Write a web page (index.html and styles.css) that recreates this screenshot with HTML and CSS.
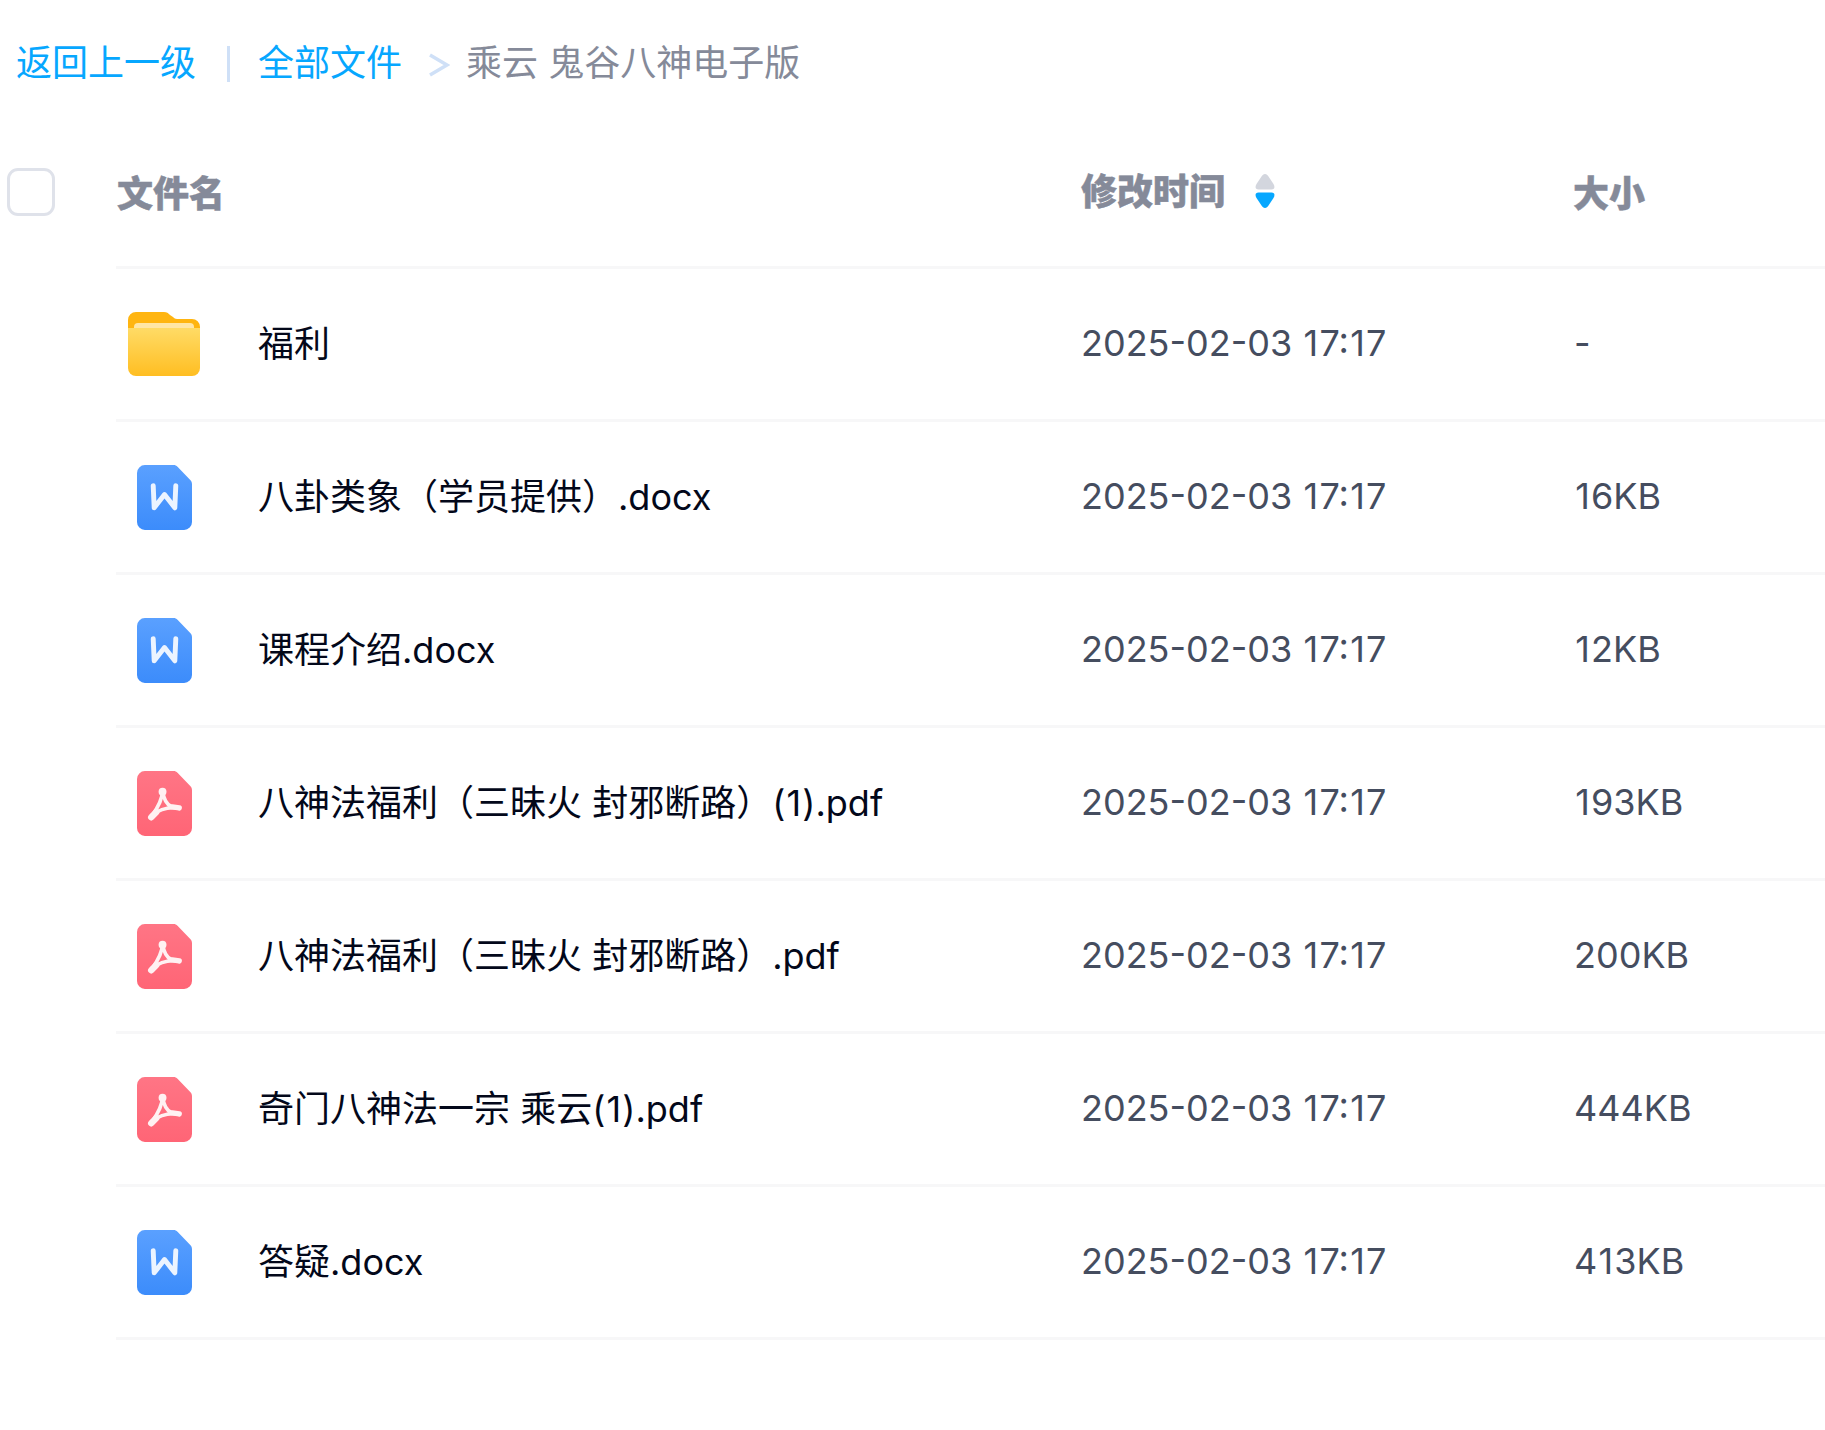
FILE: index.html
```html
<!DOCTYPE html>
<html lang="zh-CN">
<head>
<meta charset="utf-8">
<title>全部文件</title>
<link rel="stylesheet" href="styles.css">
</head>
<body>
<svg class="defs" width="0" height="0" aria-hidden="true">
  <defs>
    <linearGradient id="gFolder" x1="0" y1="0" x2="0" y2="1"><stop offset="0" stop-color="#ffdb66"/><stop offset="1" stop-color="#ffbe22"/></linearGradient>
    <linearGradient id="gWord" x1="0" y1="0" x2="0" y2="1"><stop offset="0" stop-color="#5aa0ff"/><stop offset="1" stop-color="#3c8cfb"/></linearGradient>
    <linearGradient id="gPdf" x1="0" y1="0" x2="0" y2="1"><stop offset="0" stop-color="#ff7585"/><stop offset="1" stop-color="#ff6576"/></linearGradient>
    <symbol id="folder" viewBox="0 0 72 64">
      <path d="M0 8a8 8 0 0 1 8-8h28c3 0 4 1 6 3l3 2c2 2 3 2 6 2h13a8 8 0 0 1 8 8v10H0z" fill="#ffb511"/>
      <path d="M10 11h52a4 4 0 0 1 4 4v3H6v-3a4 4 0 0 1 4-4z" fill="#ffe6a6"/>
      <path d="M0 16h72v40a8 8 0 0 1-8 8H8a8 8 0 0 1-8-8z" fill="url(#gFolder)"/>
    </symbol>
    <symbol id="word" viewBox="0 0 56 66">
      <path d="M8 0h29c2 0 3 .6 4.500 2L54 15c1.400 1.400 2 2.600 2 4.500V58a8 8 0 0 1-8 8H8a8 8 0 0 1-8-8V8a8 8 0 0 1 8-8z" fill="url(#gWord)"/>
      <path d="M16.500 21l1 22.500L28 30l10.500 13.500 1-22.500" fill="none" stroke="#ecf4ff" stroke-width="5" stroke-linecap="round" stroke-linejoin="round"/>
    </symbol>
    <symbol id="pdf" viewBox="0 0 56 66">
      <path d="M8 0h29c2 0 3 .6 4.500 2L54 15c1.400 1.400 2 2.600 2 4.500V58a8 8 0 0 1-8 8H8a8 8 0 0 1-8-8V8a8 8 0 0 1 8-8z" fill="url(#gPdf)"/>
      <path d="M26 20c0 8-4 16-11 26M26 20c1 7 4 14 9 16M15 45c8-6 18-9 28-7" fill="none" stroke="#fff1f2" stroke-width="3.800" stroke-linecap="round"/>
      <circle cx="26" cy="21" r="4" fill="#fff1f2"/>
      <path d="M14.500 47l5-5" stroke="#fff1f2" stroke-width="6.500" stroke-linecap="round"/>
      <path d="M36 36.500l7 1" stroke="#fff1f2" stroke-width="5.500" stroke-linecap="round"/>
    </symbol>
  </defs>
</svg>

<nav class="crumbs">
  <a class="link">返回上一级</a>
  <span class="bar"></span>
  <a class="link">全部文件</a>
  <svg class="chev" viewBox="0 0 22 24" width="22" height="24"><path d="M2 2l17 10L2 22" fill="none" stroke="#cfe0f7" stroke-width="3.600"/></svg>
  <span class="current">乘云 鬼谷八神电子版</span>
</nav>

<div class="head">
  <span class="check"></span>
  <div class="h-name">文件名</div>
  <div class="h-time">修改时间
    <svg class="sort" viewBox="0 0 20 34" width="20" height="34">
      <path d="M10 0c1.500 0 2.500 1 3.500 2.500L18.500 10c1.500 2.500 1.500 5.500-2 5.500h-13C0 15.500 0 12.500 1.500 10l5-7.500C7.500 1 8.500 0 10 0z" fill="#d3d6de"/>
      <path d="M10 34c1.500 0 2.500-1 3.500-2.500l5-7.500c1.500-2.500 1.500-5.500-2-5.500h-13C0 18.500 0 21.500 1.500 24l5 7.500C7.500 33 8.500 34 10 34z" fill="#06a7ff"/>
    </svg>
  </div>
  <div class="h-size">大小</div>
</div>

<main class="list">
  <div class="row"><span class="ic"><svg class="i-folder"><use href="#folder"/></svg></span><span class="name">福利</span><span class="time">2025-02-03 <i>1</i>7:<i>1</i>7</span><span class="size">-</span></div>
  <div class="row"><span class="ic"><svg class="i-doc"><use href="#word"/></svg></span><span class="name">八卦类象（学员提供）.docx</span><span class="time">2025-02-03 <i>1</i>7:<i>1</i>7</span><span class="size"><i>1</i>6KB</span></div>
  <div class="row"><span class="ic"><svg class="i-doc"><use href="#word"/></svg></span><span class="name">课程介绍.docx</span><span class="time">2025-02-03 <i>1</i>7:<i>1</i>7</span><span class="size"><i>1</i>2KB</span></div>
  <div class="row"><span class="ic"><svg class="i-doc"><use href="#pdf"/></svg></span><span class="name">八神法福利（三昧火 封邪断路）(<i>1</i>).pdf</span><span class="time">2025-02-03 <i>1</i>7:<i>1</i>7</span><span class="size"><i>1</i>93KB</span></div>
  <div class="row"><span class="ic"><svg class="i-doc"><use href="#pdf"/></svg></span><span class="name">八神法福利（三昧火 封邪断路）.pdf</span><span class="time">2025-02-03 <i>1</i>7:<i>1</i>7</span><span class="size">200KB</span></div>
  <div class="row"><span class="ic"><svg class="i-doc"><use href="#pdf"/></svg></span><span class="name">奇门八神法一宗 乘云(<i>1</i>).pdf</span><span class="time">2025-02-03 <i>1</i>7:<i>1</i>7</span><span class="size">444KB</span></div>
  <div class="row"><span class="ic"><svg class="i-doc"><use href="#word"/></svg></span><span class="name">答疑.docx</span><span class="time">2025-02-03 <i>1</i>7:<i>1</i>7</span><span class="size">4<i>1</i>3KB</span></div>
</main>
</body>
</html>
```
FILE: styles.css
```css
* { box-sizing: border-box; }
html, body { margin: 0; padding: 0; background: #fff; }
body {
  width: 1825px;
  height: 1430px;
  overflow: hidden;
  font-family: Inter, "Noto Sans CJK SC", sans-serif;
  font-size: 36px;
  color: #454d5f;
}
.defs { display: block; height: 0; }
i { font-style: normal; padding: 0 1.200px; }

.crumbs {
  display: flex;
  align-items: center;
  height: 44px;
  margin-top: 41px;
  padding-left: 16px;
  line-height: 44px;
}
.link { color: #06a7ff; }
.bar { width: 3px; height: 36px; margin: 2px 28px 0 31px; background: #cfe0f7; }
.chev { margin: 4px 16px 0 26px; }
.current { color: #858a99; }

.head {
  display: flex;
  align-items: center;
  height: 144px;
  margin-top: 37px;
  padding-left: 7px;
  font-weight: 900;
  -webkit-text-stroke: 0.5px #858a99;
  color: #858a99;
  line-height: 44px;
}
.check { width: 48px; height: 48px; margin-top: -4px; border: 3px solid #dfe2ea; border-radius: 11px; }
.h-name { width: 964px; margin-left: 62px; }
.h-time { width: 492px; display: flex; align-items: center; margin-top: -5px; }
.sort { margin-left: 30px; margin-top: -2px; }

.list { margin-left: 116px; border-top: 3px solid #f7f7f8; }
.row {
  display: flex;
  align-items: center;
  height: 153px;
  border-bottom: 3px solid #f7f7f8;
}
.ic { width: 142px; padding-left: 12px; display: flex; }
.i-folder { width: 72px; height: 64px; }
.i-doc { width: 55px; height: 65px; margin-left: 9px; }
.name { width: 823px; margin-top: -6px; color: #03081a; }
.time { width: 493px; margin-top: -2px; }
.size { margin-top: -2px; }
```
